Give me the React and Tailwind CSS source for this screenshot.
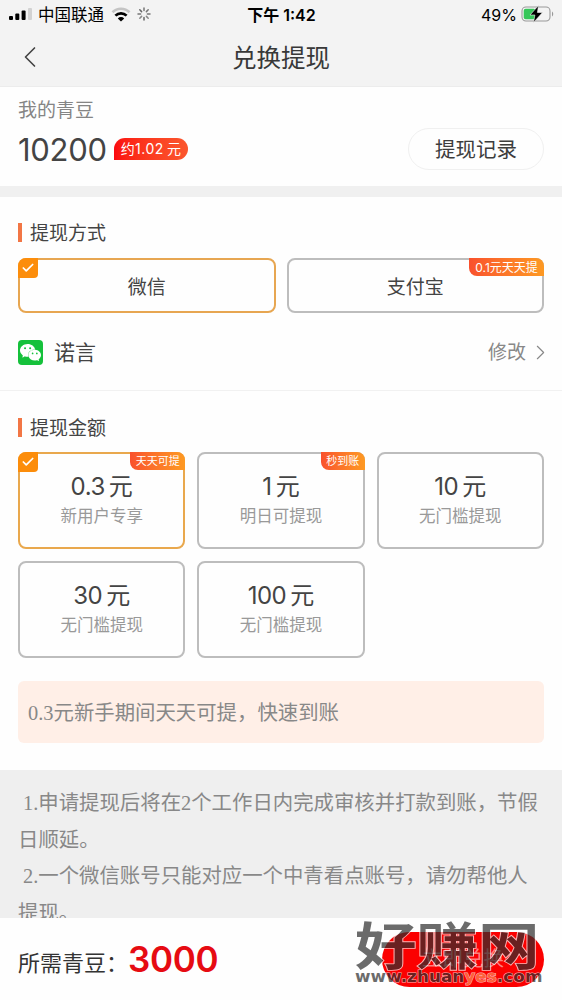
import { ChevronLeft, ChevronRight, Check } from "lucide-react";
import { SiWechat } from "react-icons/si";

const amounts = [
  { value: "0.3", note: "新用户专享", tag: "天天可提", tagWidth: "w-[55px]", selected: true },
  { value: "1", note: "明日可提现", tag: "秒到账", tagWidth: "w-[44px]" },
  { value: "10", note: "无门槛提现" },
  { value: "30", note: "无门槛提现" },
  { value: "100", note: "无门槛提现" },
];

function Signal() {
  return (
    <svg className="h-3 w-6" viewBox="0 0 24 12">
      <rect x="0" y="8" width="4" height="4" rx="1" />
      <rect x="6.3" y="5.5" width="4" height="6.5" rx="1" />
      <rect x="12.6" y="2.5" width="4" height="9.5" rx="1" />
      <rect x="19" y="0" width="4" height="12" rx="1" fill="#d2d2d2" />
    </svg>
  );
}

function Wifi() {
  return (
    <svg className="h-[15px] w-[20px]" viewBox="0 0 20 15" fill="none">
      <path d="M1.5 5.3a12 12 0 0 1 17 0" stroke="#c4c4c4" strokeWidth="2.7" />
      <path d="M4.4 8.6a8 8 0 0 1 11.2 0" stroke="#000" strokeWidth="2.7" />
      <path d="M10 14.6 6.8 11.4a4.6 4.6 0 0 1 6.4 0z" fill="#000" />
    </svg>
  );
}

function Spinner() {
  return (
    <svg className="size-[14px]" viewBox="0 0 14 14" stroke="#666" strokeWidth="1.5" strokeLinecap="round">
      <path d="M7 1v2.6M13 7h-2.6M3.6 7H1M11.2 2.8 9.4 4.6" stroke="#777" />
      <path d="M7 13v-2.6M2.8 2.8l1.8 1.8" stroke="#666" />
      <path d="M2.8 11.2l1.8-1.8M11.2 11.2 9.4 9.4" stroke="#888" />
    </svg>
  );
}

function Battery() {
  return (
    <svg className="h-[18px] w-[33px]" viewBox="0 0 33 18">
      <rect x="1" y="2" width="28" height="14" rx="4" fill="none" stroke="#999" strokeWidth="1.1" />
      <rect x="2.7" y="3.7" width="12" height="10.6" rx="2" fill="#35c759" />
      <path d="M31 6.5c1.6.7 1.6 4.3 0 5z" fill="#999" />
      <path d="M17.5 0.500 9 10h4.900l-1.400 7.500 9-10h-5.100z" fill="#000" stroke="#f3f3f3" strokeWidth=".6" />
    </svg>
  );
}

function SectionTitle({ children }) {
  return (
    <h2 className="flex h-7 items-center gap-2 text-[19px] leading-none text-[#444]">
      <span className="h-[19px] w-1 bg-[#f27645]" />
      <span className="pt-[2px]">{children}</span>
    </h2>
  );
}

function SelectedMark() {
  return (
    <span className="absolute -top-0.5 -left-0.5 flex size-5 items-center justify-center rounded-tl-[8px] rounded-br-[4px] bg-[#fc8d0b] text-white">
      <Check size={14} strokeWidth={3} />
    </span>
  );
}

function Tag({ children, width }) {
  return (
    <span className={`absolute -top-0.5 -right-0.5 flex h-[18px] ${width} items-center justify-center rounded-tr-[8px] rounded-bl-[8px] bg-linear-to-r from-[#f9502d] to-[#fd9922] pt-px text-[11px] leading-none whitespace-nowrap text-white`}>
      {children}
    </span>
  );
}

export default function App() {
  return (
    <div className="flex h-[1000px] w-[562px] flex-col overflow-hidden bg-[#fefefe] font-['Inter','Noto_Sans_CJK_SC',sans-serif] font-normal text-[#444]">
      <header className="h-[87px] shrink-0 border-b border-[#ececec] bg-[#f3f3f3]">
        <div className="grid h-7 grid-cols-3 items-center pr-2 pl-[9px] text-[16px] leading-none text-black">
          <div className="flex items-center">
            <Signal />
            <span className="mr-[7px] ml-[5px] pt-[2px] text-[16.500px] whitespace-nowrap">中国联通</span>
            <Wifi />
            <span className="ml-[6px]"><Spinner /></span>
          </div>
          <div className="pt-px text-center text-[16px] font-semibold">下午 1:42</div>
          <div className="flex items-center justify-end gap-[4px]">
            <span className="pt-px">49%</span>
            <Battery />
          </div>
        </div>
        <div className="grid h-[58px] grid-cols-3 items-center px-[14px]">
          <ChevronLeft size={36} strokeWidth={1.1} className="-ml-[2px] text-[#444]" />
          <h1 className="pt-[2px] text-center text-[24.500px] leading-none text-[#383838]">兑换提现</h1>
        </div>
      </header>

      <section className="flex h-[99px] shrink-0 items-start justify-between px-[18px]">
        <div className="pt-[13px]">
          <div className="h-[22px] text-[19px] leading-[22px] text-[#858585]">我的青豆</div>
          <div className="mt-[10px] flex h-[34px] items-center">
            <span className="w-[96px] text-[31px] leading-none tracking-[-0.3px] text-[#444]">10200</span>
            <span className="flex h-[22px] w-[74px] items-center justify-center rounded-full rounded-bl-none bg-linear-to-r from-[#fb0810] to-[#fb562d] text-[14px] leading-none tracking-[0.5px] text-white">约1.02<span className="ml-[3px]">元</span></span>
          </div>
        </div>
        <button className="mt-[41px] flex h-[42px] w-[136px] items-center justify-center rounded-full border border-[#f0f0f0] pt-[2px] text-[20.500px] leading-none text-[#3d3d3d]">提现记录</button>
      </section>
      <div className="h-[11px] shrink-0 bg-[#f0f0f0]" />

      <section className="h-[194px] shrink-0 border-b border-[#f1f1f1] px-[18px] pt-[21px]">
        <SectionTitle>提现方式</SectionTitle>
        <div className="mt-3 grid grid-cols-2 gap-[11px]">
          <div className="relative flex h-[55px] items-center justify-center rounded-[8px] border-2 border-[#e7a651] pt-[3px] text-[19px] leading-none">
            <SelectedMark />
            微信
          </div>
          <div className="relative flex h-[55px] items-center justify-center rounded-[8px] border-2 border-[#bdbdbd] pt-[3px] text-[19px] leading-none">
            支付宝
            <Tag width="w-[75px]"><span className="text-[12px]">0.1元天天提</span></Tag>
          </div>
        </div>
        <div className="mt-[26px] flex h-[26px] items-center">
          <span className="flex size-[25px] items-center justify-center rounded-[4px] bg-[#15c13b] text-white">
            <SiWechat size={21} />
          </span>
          <span className="ml-[11px] text-[21px] leading-none">诺言</span>
          <span className="ml-auto pt-px text-[19px] leading-none text-[#888]">修改</span>
          <ChevronRight size={25} strokeWidth={1.1} className="ml-[2px] -mr-[9px] text-[#888]" />
        </div>
      </section>

      <section className="h-[379px] shrink-0 px-[18px] pt-[22px]">
        <SectionTitle>提现金额</SectionTitle>
        <div className="mt-[11px] grid grid-cols-3 gap-3">
          {amounts.map((a) => (
            <div key={a.value} className={`relative flex h-[97px] flex-col items-center rounded-[8px] border-2 pt-[19px] ${a.selected ? "border-[#e9a84d]" : "border-[#bdbdbd]"}`}>
              {a.selected && <SelectedMark />}
              {a.tag && <Tag width={a.tagWidth}>{a.tag}</Tag>}
              <div className="flex h-7 items-center gap-1 text-[24px] leading-none">
                <span className="tracking-[-0.5px]">{a.value}</span>
                <span>元</span>
              </div>
              <div className="mt-[5px] h-5 text-[16.500px] leading-5 text-[#999]">{a.note}</div>
            </div>
          ))}
        </div>
        <p className="mt-[23px] flex h-[62px] items-center rounded-[6px] bg-[#ffefe7] pt-[3px] pl-[10px] font-['Liberation_Serif','Noto_Sans_CJK_SC',serif] text-[20.400px] text-[#888]">0.3元新手期间天天可提，快速到账</p>
      </section>

      <section className="h-[148px] shrink-0 overflow-hidden bg-[#efefef] pt-[15px] pl-[18px] font-['Liberation_Serif','Noto_Sans_CJK_SC',serif] text-[20.400px] leading-[36.500px] whitespace-nowrap text-[#888]">
        <p className="pl-[5px]">1.申请提现后将在2个工作日内完成审核并打款到账，节假</p>
        <p>日顺延。</p>
        <p className="pl-[5px]">2.一个微信账号只能对应一个中青看点账号，请勿帮他人</p>
        <p>提现。</p>
      </section>

      <footer className="relative flex h-[82px] shrink-0 items-center bg-[#fefefe] px-[18px]">
        <span className="pt-[8px] text-[22px] leading-none text-[#333]">所需青豆：</span>
        <span className="text-[35px] leading-none font-semibold tracking-[-0.3px] text-[#e60b12]">3000</span>
        <button className="ml-auto flex h-[55px] w-[162px] items-center justify-center rounded-full bg-[#fb0000] text-[20.500px] leading-none text-white/50">立即兑换</button>
        <div className="absolute top-[3px] left-[355px] w-[186px] opacity-70">
          <div className="h-[47px] origin-top scale-y-[0.83] text-[61.500px] leading-[61px] font-bold whitespace-nowrap text-[#2e2e2e] [-webkit-text-stroke:2px_white] [paint-order:stroke_fill]">好赚网</div>
          <div className="w-[186px] origin-left scale-x-[1.05] font-['DejaVu_Sans',sans-serif] text-[16px] leading-[18px] font-bold tracking-[0.05px] whitespace-nowrap text-[#2e2e2e] [-webkit-text-stroke:1px_white] [paint-order:stroke_fill]">www.zhuan<span className="text-[#ff8a54]">yes</span>.com</div>
        </div>
      </footer>
    </div>
  );
}
